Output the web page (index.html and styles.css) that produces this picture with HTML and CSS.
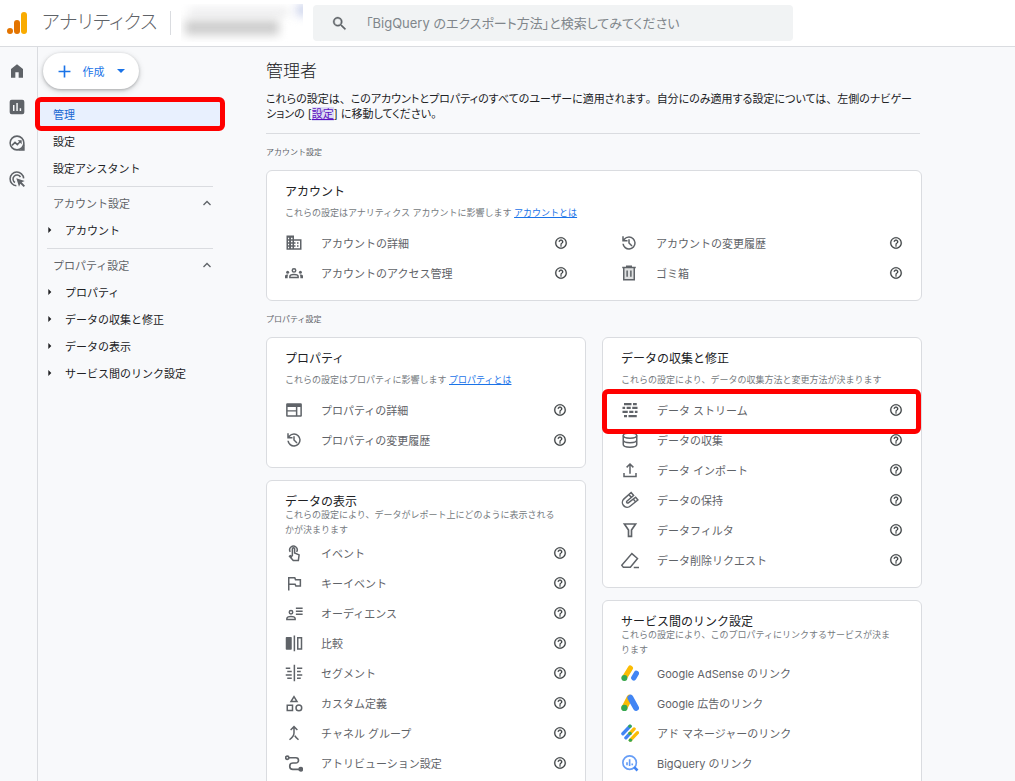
FILE: index.html
```html
<!DOCTYPE html>
<html lang="ja">
<head>
<meta charset="utf-8">
<meta name="viewport" content="width=device-width, initial-scale=1">
<title>アナリティクス</title>
<link rel="stylesheet" href="styles.css">
</head>
<body>
<svg class="sprite" aria-hidden="true">
  <symbol id="help" viewBox="0 0 24 24"><path d="M11 18h2v-2h-2v2zm1-16C6.48 2 2 6.48 2 12s4.48 10 10 10 10-4.48 10-10S17.52 2 12 2zm0 18c-4.41 0-8-3.59-8-8s3.59-8 8-8 8 3.59 8 8-3.59 8-8 8zm0-14c-2.21 0-4 1.79-4 4h2c0-1.1.9-2 2-2s2 .9 2 2c0 2-3 1.75-3 5h2c0-2.25 3-2.5 3-5 0-2.21-1.79-4-4-4z" stroke="currentColor" stroke-width=".3"/></symbol>
  <symbol id="history" viewBox="0 0 24 24"><path d="M12 3a9 9 0 0 0-7 3.35V3H3v7h7V8H6.250A7 7 0 1 1 5.070 13H3.050A9 9 0 1 0 12 3zm-1 4v5.400l4.300 4.300 1.400-1.400-3.700-3.700V7z"/></symbol>
  <symbol id="chevron" viewBox="0 0 24 24"><path d="M5 16l7-7 7 7" fill="none" stroke="currentColor" stroke-width="2.600"/></symbol>
  <symbol id="arrow" viewBox="0 0 24 24"><path d="M7 3l9 9-9 9z"/></symbol>
</svg>

<header class="topbar">
  <a class="brand" href="#">
    <svg class="logo" viewBox="0 0 20 23" aria-hidden="true">
      <rect x="14" y="0" width="6" height="22" rx="3" fill="#f9ab00"/>
      <rect x="7" y="8" width="6" height="14" rx="3" fill="#e37400"/>
      <circle cx="3" cy="19" r="3" fill="#e37400"/>
    </svg>
    <span>アナリティクス</span>
  </a>
  <div class="account" aria-hidden="true"><i class="smudge smudge-top"></i><i class="smudge smudge-main"></i><i class="smudge smudge-blue"></i></div>
  <label class="search">
    <svg viewBox="0 0 24 24" aria-hidden="true"><path d="M15.500 14h-.79l-.28-.27A6.500 6.500 0 1 0 13.730 14.430l.27.28v.79l5.500 5.490L21 19.500 15.500 14zm-6 0a4.500 4.500 0 1 1 0-9 4.500 4.500 0 0 1 0 9z" stroke="currentColor" stroke-width=".5"/></svg>
    <input type="search" aria-label="検索" placeholder="「BigQuery のエクスポート方法」と検索してみてください">
  </label>
</header>

<div class="shell">
  <nav class="rail" aria-label="メイン">
    <a href="#" aria-label="ホーム"><svg viewBox="0 0 24 24"><path d="M3 22V9l9-7 9 7v13h-6.500v-8h-5v8z"/></svg></a>
    <a href="#" aria-label="レポート"><svg viewBox="0 0 24 24"><path fill-rule="evenodd" d="M4 1h16a3 3 0 0 1 3 3v16a3 3 0 0 1-3 3H4a3 3 0 0 1-3-3V4a3 3 0 0 1 3-3zm2 8v9h2.200V9zm5-3v12h2.200V6zm5 8v4h2.200v-4z"/></svg></a>
    <a href="#" aria-label="探索"><svg viewBox="0 0 24 24"><g fill="none" stroke="currentColor" stroke-width="2.300"><circle cx="12" cy="12" r="10.300"/><path d="M4.500 15.500l4.500-4.500 3.500 3.500 5-5.500"/></g><path d="M13 8h6v6zM23.500 12v11.500H12c6 0 10-5 11.500-11.500z"/></svg></a>
    <a href="#" aria-label="広告"><svg viewBox="0 0 24 24"><g fill="none" stroke="currentColor" stroke-width="2.300"><path d="M11 22A10.200 10.200 0 1 1 22 11"/><path d="M9 17.200A6 6 0 1 1 17.200 9"/></g><path d="M11 11l12.500 4-4.500 2 5 5-2 2-5-5-2 4.500z"/></svg></a>
  </nav>

  <aside class="side">
    <button class="create" type="button">
      <svg viewBox="0 0 24 24" aria-hidden="true"><path d="M12 1v22M1 12h22" fill="none" stroke="currentColor" stroke-width="3"/></svg>
      <span>作成</span>
      <svg class="caret" viewBox="0 0 10 5" aria-hidden="true"><path d="M0 0h10L5 5z"/></svg>
    </button>
    <nav class="menu" aria-label="管理">
      <a class="item marked selected" href="#">管理</a>
      <a class="item" href="#">設定</a>
      <a class="item" href="#">設定アシスタント</a>
      <hr>
      <button class="item group" type="button"><span>アカウント設定</span><svg viewBox="0 0 24 24"><use href="#chevron"/></svg></button>
      <a class="item child" href="#"><svg viewBox="0 0 24 24"><use href="#arrow"/></svg>アカウント</a>
      <hr>
      <button class="item group" type="button"><span>プロパティ設定</span><svg viewBox="0 0 24 24"><use href="#chevron"/></svg></button>
      <a class="item child" href="#"><svg viewBox="0 0 24 24"><use href="#arrow"/></svg>プロパティ</a>
      <a class="item child" href="#"><svg viewBox="0 0 24 24"><use href="#arrow"/></svg>データの収集と修正</a>
      <a class="item child" href="#"><svg viewBox="0 0 24 24"><use href="#arrow"/></svg>データの表示</a>
      <a class="item child" href="#"><svg viewBox="0 0 24 24"><use href="#arrow"/></svg>サービス間のリンク設定</a>
    </nav>
  </aside>

  <main class="main">
    <h1>管理者</h1>
    <p class="intro">これらの設定は<span class="wide">、</span>このアカウントとプロパティのすべてのユーザーに適用されます<span class="wide">。</span>自分にのみ適用する設定については<span class="wide">、</span>左側のナビゲーションの [<a class="wide" href="#">設定</a>] に移動してください。</p>

    <h2 class="section">アカウント設定</h2>
    <section class="card">
      <h3>アカウント</h3>
      <p class="desc"><span>これらの設定はアナリティクス アカウントに影響します <a href="#">アカウントとは</a></span></p>
      <ul class="rows two">
        <li class="row"><svg viewBox="0 0 24 24"><path d="M12 7V2H2v19h20V7H12zM5.500 19H4v-2h1.500v2zm0-4H4v-2h1.500v2zm0-4H4V9h1.500v2zm0-4H4V5h1.500v2zm4.500 12H8v-2h2v2zm0-4H8v-2h2v2zm0-4H8V9h2v2zm0-4H8V5h2v2zm10 12h-8v-2h2v-2h-2v-2h2v-2h-2V9h8v10zm-2-8h-2v2h2v-2zm0 4h-2v2h2v-2z"/></svg><a href="#">アカウントの詳細</a><button type="button" aria-label="ヘルプ"><svg viewBox="0 0 24 24"><use href="#help"/></svg></button></li>
        <li class="row"><svg viewBox="0 0 24 24"><use href="#history"/></svg><a href="#">アカウントの変更履歴</a><button type="button" aria-label="ヘルプ"><svg viewBox="0 0 24 24"><use href="#help"/></svg></button></li>
        <li class="row"><svg viewBox="0 0 24 24"><g fill="none" stroke="currentColor" stroke-width="2"><circle cx="12" cy="8.500" r="2.300"/><path d="M6.500 18v-1.500c0-1.500 3-2.500 5.500-2.500s5.500 1 5.500 2.500V18z"/></g><circle cx="3.500" cy="11" r="2"/><circle cx="20.500" cy="11" r="2"/><path d="M0 19v-3c0-1.500 2-2 4.500-2-.8 1-1 2-1 5zM24 19v-3c0-1.500-2-2-4.500-2 .8 1 1 2 1 5z"/></svg><a href="#">アカウントのアクセス管理</a><button type="button" aria-label="ヘルプ"><svg viewBox="0 0 24 24"><use href="#help"/></svg></button></li>
        <li class="row"><svg viewBox="0 0 24 24"><path d="M5 5h14v16H5z" fill="currentColor" fill-opacity=".2"/><g fill="none" stroke="currentColor" stroke-width="2"><path d="M5 5v16h14V5M9.500 8.500V17M14.500 8.500V17M3 4.500h18M8 3h8"/></g></svg><a href="#">ゴミ箱</a><button type="button" aria-label="ヘルプ"><svg viewBox="0 0 24 24"><use href="#help"/></svg></button></li>
      </ul>
    </section>

    <h2 class="section">プロパティ設定</h2>
    <div class="columns">
      <div class="column">
        <section class="card">
          <h3>プロパティ</h3>
          <p class="desc"><span>これらの設定はプロパティに影響します <a href="#">プロパティとは</a></span></p>
          <ul class="rows">
            <li class="row"><svg viewBox="0 0 24 24"><path fill-rule="evenodd" d="M3 3h18a1.500 1.500 0 0 1 1.500 1.500v15A1.500 1.500 0 0 1 21 21H3a1.500 1.500 0 0 1-1.500-1.500v-15A1.500 1.500 0 0 1 3 3zm.5 5v4.300h11V8zm0 6v5h11v-5zM16.500 8v11h4V8z"/></svg><a href="#">プロパティの詳細</a><button type="button" aria-label="ヘルプ"><svg viewBox="0 0 24 24"><use href="#help"/></svg></button></li>
            <li class="row"><svg viewBox="0 0 24 24"><use href="#history"/></svg><a href="#">プロパティの変更履歴</a><button type="button" aria-label="ヘルプ"><svg viewBox="0 0 24 24"><use href="#help"/></svg></button></li>
          </ul>
        </section>

        <section class="card">
          <h3>データの表示</h3>
          <p class="desc"><span>これらの設定により、データがレポート上にどのように表示されるかが決まります</span></p>
          <ul class="rows">
            <li class="row"><svg viewBox="0 0 24 24"><g fill="none" stroke="currentColor" stroke-width="2"><path d="M7 10.500a5 5 0 1 1 8.500 0"/><path d="M9.800 16V6.500a1.500 1.500 0 0 1 3 0V12l6 2.500-1 7.500H11l-5-5.500 1-1 2.800 1.500"/></g></svg><a href="#">イベント</a><button type="button" aria-label="ヘルプ"><svg viewBox="0 0 24 24"><use href="#help"/></svg></button></li>
            <li class="row"><svg viewBox="0 0 24 24"><path d="M5 22V5h8l1 2.500h6.500v8.500h-6l-1-2.500H5" fill="none" stroke="currentColor" stroke-width="2"/></svg><a href="#">キーイベント</a><button type="button" aria-label="ヘルプ"><svg viewBox="0 0 24 24"><use href="#help"/></svg></button></li>
            <li class="row"><svg viewBox="0 0 24 24"><g fill="none" stroke="currentColor" stroke-width="2"><circle cx="8" cy="11" r="2.300"/><path d="M2.500 20.500v-1.300c0-1.500 3-2.700 5.500-2.700s5.500 1.200 5.500 2.700v1.300zM14.500 5.500h9M14.500 9.500h9M14.500 13.500h9"/></g></svg><a href="#">オーディエンス</a><button type="button" aria-label="ヘルプ"><svg viewBox="0 0 24 24"><use href="#help"/></svg></button></li>
            <li class="row"><svg viewBox="0 0 24 24"><rect x="1" y="4" width="8" height="17" rx="1"/><path d="M12.500 2v21M17 5h5v15h-5z" fill="none" stroke="currentColor" stroke-width="2"/></svg><a href="#">比較</a><button type="button" aria-label="ヘルプ"><svg viewBox="0 0 24 24"><use href="#help"/></svg></button></li>
            <li class="row"><svg viewBox="0 0 24 24"><path d="M12.500 1v22M1 5.500h6M3 10h6M1 14.500h8M3 19h6M16 5.500h7M16 10h5M16 14.500h7M16 19h5" fill="none" stroke="currentColor" stroke-width="2"/></svg><a href="#">セグメント</a><button type="button" aria-label="ヘルプ"><svg viewBox="0 0 24 24"><use href="#help"/></svg></button></li>
            <li class="row"><svg viewBox="0 0 24 24"><g fill="none" stroke="currentColor" stroke-width="2"><path d="M12 3.500L8 10h8zM3 15h7v7H3z"/><circle cx="18.500" cy="18.500" r="3.800"/></g></svg><a href="#">カスタム定義</a><button type="button" aria-label="ヘルプ"><svg viewBox="0 0 24 24"><use href="#help"/></svg></button></li>
            <li class="row"><svg viewBox="0 0 24 24"><path d="M7.500 8L12 3.500 16.500 8M12 4v8c0 4-2 6-6 9M13 15.500c1 2 2.500 3.500 5 5.500" fill="none" stroke="currentColor" stroke-width="2"/></svg><a href="#">チャネル グループ</a><button type="button" aria-label="ヘルプ"><svg viewBox="0 0 24 24"><use href="#help"/></svg></button></li>
            <li class="row"><svg viewBox="0 0 24 24"><g fill="none" stroke="currentColor" stroke-width="2.200"><circle cx="3" cy="5" r="2.200"/><path d="M5 5h9.500a3.500 3.500 0 0 1 0 7h-4a4.200 4.200 0 0 0 0 8.400H20"/></g><circle cx="21" cy="20.400" r="3.300"/></svg><a href="#">アトリビューション設定</a><button type="button" aria-label="ヘルプ"><svg viewBox="0 0 24 24"><use href="#help"/></svg></button></li>
          </ul>
        </section>
      </div>

      <div class="column">
        <section class="card">
          <h3>データの収集と修正</h3>
          <p class="desc"><span>これらの設定により、データの収集方法と変更方法が決まります</span></p>
          <ul class="rows">
            <li class="row marked"><svg viewBox="0 0 24 24"><path d="M4 4h10M16 4h5M2 9h3.500M7.500 9H13M15 9h7M2 14.500h7M11 14.500h5.500M18.500 14.500H22M4 20h4M10 20h11" fill="none" stroke="currentColor" stroke-width="3"/></svg><a href="#">データ ストリーム</a><button type="button" aria-label="ヘルプ"><svg viewBox="0 0 24 24"><use href="#help"/></svg></button></li>
            <li class="row"><svg viewBox="0 0 24 24"><g fill="none" stroke="currentColor" stroke-width="2"><ellipse cx="12" cy="6" rx="9" ry="3.500"/><path d="M3 6v12c0 2 4 3.500 9 3.500s9-1.500 9-3.500V6M3 12c0 2 4 3.500 9 3.500s9-1.500 9-3.500"/></g></svg><a href="#">データの収集</a><button type="button" aria-label="ヘルプ"><svg viewBox="0 0 24 24"><use href="#help"/></svg></button></li>
            <li class="row"><svg viewBox="0 0 24 24"><path d="M12 17V4.500M7.500 8.500L12 4l4.500 4.500M4 16v4.500h16V16" fill="none" stroke="currentColor" stroke-width="2"/></svg><a href="#">データ インポート</a><button type="button" aria-label="ヘルプ"><svg viewBox="0 0 24 24"><use href="#help"/></svg></button></li>
            <li class="row"><svg viewBox="0 0 24 24"><g fill="none" stroke="currentColor" stroke-width="2"><path d="M13.500 2L4 10.500a6.300 6.300 0 0 0 8.500 9.500l10-8-3-3.700-9.700 7.500a1.500 1.500 0 0 1-2-2.200L16.800 6z"/><path d="M10.500 5L14 8.500M16.500 11l3 3.500"/></g></svg><a href="#">データの保持</a><button type="button" aria-label="ヘルプ"><svg viewBox="0 0 24 24"><use href="#help"/></svg></button></li>
            <li class="row"><svg viewBox="0 0 24 24"><path d="M4.500 4h15L14 12v8.500h-4V12z" fill="none" stroke="currentColor" stroke-width="2.200"/></svg><a href="#">データフィルタ</a><button type="button" aria-label="ヘルプ"><svg viewBox="0 0 24 24"><use href="#help"/></svg></button></li>
            <li class="row"><svg viewBox="0 0 24 24"><path d="M3 21.500l-2-2.500L14.500 3.500 22 10 12.500 21.500zM17 22h7" fill="none" stroke="currentColor" stroke-width="2"/></svg><a href="#">データ削除リクエスト</a><button type="button" aria-label="ヘルプ"><svg viewBox="0 0 24 24"><use href="#help"/></svg></button></li>
          </ul>
        </section>

        <section class="card">
          <h3>サービス間のリンク設定</h3>
          <p class="desc"><span>これらの設定により、このプロパティにリンクするサービスが決まります</span></p>
          <ul class="rows">
            <li class="row"><svg viewBox="0 0 24 24"><g fill="none" stroke-linecap="round" stroke-width="7"><path d="M12.500 5.500L4.500 18.500" stroke="#fbbc04"/><path d="M20.500 12.500L17 18.500" stroke="#4285f4"/></g><circle cx="4.500" cy="18.500" r="4" fill="#34a853"/></svg><a href="#">Google AdSense のリンク</a></li>
            <li class="row"><svg viewBox="0 0 24 24"><g fill="none" stroke-linecap="round" stroke-width="8"><path d="M11.500 5L4.500 18.500" stroke="#fbbc04"/><path d="M12.500 5L20 18.500" stroke="#4285f4"/></g><circle cx="4.500" cy="18.500" r="4.200" fill="#34a853"/></svg><a href="#">Google 広告のリンク</a></li>
            <li class="row"><svg viewBox="0 0 24 24"><g fill="none" stroke-linecap="round" stroke-width="4.400"><path d="M2.500 13L12 3M6.500 18.500L12 12.500" stroke="#4285f4"/><path d="M12 12.500l5.500-6M12.500 21.500l9.500-10" stroke="#fbbc04"/></g><g fill="#34a853"><circle cx="12" cy="3" r="2.300"/><circle cx="12" cy="12.500" r="2.300"/><circle cx="12.500" cy="21.500" r="2.300"/></g></svg><a href="#">アド マネージャーのリンク</a></li>
            <li class="row"><svg viewBox="0 0 24 24"><g fill="none" stroke="#669df6" stroke-width="2.200"><circle cx="11.500" cy="11.500" r="9"/><path d="M8 11v4M11.500 7v9M15 12.500V15"/></g><path d="M17.500 17.500l4.500 4.500" stroke="#4285f4" stroke-width="3.500"/></svg><a href="#">BigQuery のリンク</a></li>
          </ul>
        </section>
      </div>
    </div>
  </main>
</div>
</body>
</html>
```
FILE: styles.css
```css
* { box-sizing: border-box; }

html, body { height: 100%; }

body {
  margin: 0;
  display: flex;
  flex-direction: column;
  overflow: hidden;
  background: #f8f9fb;
  color: #202124;
  font-family: Inter, "Noto Sans CJK JP", sans-serif;
  font-size: 11px;
  font-weight: 400;
}

button, input { font: inherit; color: inherit; border: 0; padding: 0; background: none; }
h1, h2, h3, p, ul { margin: 0; padding: 0; font-weight: inherit; }
ul { list-style: none; }
a { color: inherit; text-decoration: none; }
svg { display: block; flex: none; fill: currentColor; }
.sprite { position: absolute; width: 0; height: 0; }

.topbar {
  flex: none;
  display: flex;
  align-items: center;
  height: 47px;
  padding-left: 7px;
  background: #fff;
  border-bottom: 1px solid #dadce0;
}
.brand {
  display: flex;
  align-items: center;
  gap: 15px;
  width: 164px;
  height: 24px;
  border-right: 1px solid #dadce0;
  color: #5f6368;
  font-size: 19px;
  font-weight: 300;
  line-height: 24px;
  font-feature-settings: "palt";
  white-space: nowrap;
}
.logo { width: 20px; height: 23px; }
.account { position: relative; flex: none; width: 122px; height: 38px; margin: 0 10px; overflow: hidden; }
.smudge { position: absolute; filter: blur(5px); }
.smudge-top { left: 8px; top: 5px; width: 100px; height: 6px; background: #e6e6e8; }
.smudge-main { left: 4px; top: 16px; width: 94px; height: 15px; background: #cdcdcd; }
.smudge-blue { left: 116px; top: 0; width: 12px; height: 12px; background: #c8d0ea; }
.search {
  display: flex;
  align-items: center;
  gap: 18px;
  flex: 0 1 480px;
  height: 36px;
  padding: 0 18px;
  border-radius: 4px;
  background: #f1f3f4;
}
.search svg { width: 17px; height: 17px; color: #5f6368; }
.search input {
  flex: 1;
  min-width: 0;
  outline: 0;
  font-size: 13px;
  font-feature-settings: "palt";
}
.search input::placeholder { color: #80868b; opacity: 1; }

.shell { flex: 1; display: flex; min-height: 0; }

.rail {
  flex: none;
  display: flex;
  flex-direction: column;
  align-items: center;
  gap: 20px;
  width: 38px;
  padding: 16px 4px 0 0;
  border-right: 1px solid #dadce0;
  color: #5f6368;
}
.rail svg { width: 16px; height: 16px; }

.side { flex: none; width: 228px; padding-top: 6px; }
.create {
  display: flex;
  align-items: center;
  justify-content: center;
  gap: 12px;
  width: 96px;
  height: 36px;
  margin-left: 5px;
  border-radius: 18px;
  background: #fff;
  box-shadow: 0 1px 3px #3c40434d, 0 2px 6px #3c404333;
  color: #1a73e8;
}
.create svg { width: 13px; height: 13px; }
.create .caret { width: 8px; height: 4px; }

.menu { width: 184px; margin-top: 11px; }
.menu hr { height: 1px; margin: 5px 9px 2px; border: 0; background: #dadce0; }
.item {
  display: flex;
  align-items: center;
  width: 100%;
  height: 27px;
  padding: 0 15px;
}
.group { justify-content: space-between; padding: 0 9px 0 15px; color: #5f6368; }
.group svg { width: 12px; height: 12px; }
.child { gap: 10px; padding-left: 7px; }
.child svg { width: 10px; height: 10px; padding: 1px; }
.selected { background: #e8f0fe; color: #1967d2; }

.marked { position: relative; }
.marked::after {
  content: "";
  position: absolute;
  inset: -3px -3px -4px;
  border: 5px solid #f00;
  border-radius: 6px;
  pointer-events: none;
}

.main { flex: 0 1 656px; min-width: 0; }
h1 { padding-top: 12px; font-size: 17px; font-weight: 300; line-height: 24px; }
.intro {
  margin: 9px 2px 0 0;
  padding-bottom: 11px;
  border-bottom: 1px solid #dadce0;
  line-height: 15px;
  font-feature-settings: "palt";
}
.wide { font-feature-settings: normal; }
.intro a { color: #5b0fc0; text-decoration: underline; background: #dcdcf4; }
.section { padding-top: 10px; font-size: 8px; line-height: 16px; color: #5f6368; }

.card {
  margin-top: 10px;
  padding: 15px 0 12px;
  border: 1px solid #dadce0;
  border-radius: 6px;
  background: #fff;
}
.column .card + .card { margin-top: 12px; }
h3 { padding: 0 18px; font-size: 12px; line-height: 11px; }
.desc {
  display: flex;
  align-items: center;
  min-height: 31px;
  padding: 0 25px 1px 18px;
  font-size: 9px;
  line-height: 15px;
  color: #757a80;
}
.desc a { color: #1a73e8; text-decoration: underline; }
.columns { display: grid; grid-template-columns: 1fr 1fr; gap: 16px; }
.rows.two { display: grid; grid-template-columns: 1fr 1fr; column-gap: 16px; }
.row {
  display: flex;
  align-items: center;
  gap: 18px;
  height: 30px;
  padding: 0 18px;
  color: #5f6368;
}
.row > svg { width: 18px; height: 18px; }
.row a { flex: 1; }
.row button { color: #3c4043; }
.row button svg { width: 14px; height: 14px; }
.row.marked::after { inset: -6px 0 -9px -1px; }
```
